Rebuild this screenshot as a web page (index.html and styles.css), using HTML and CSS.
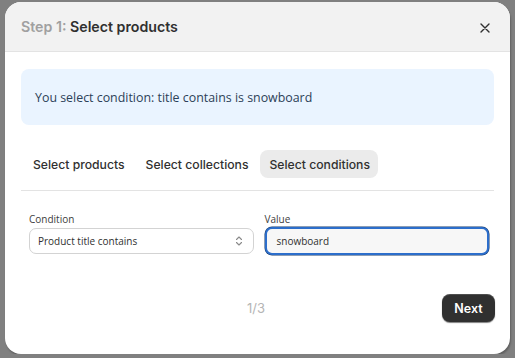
FILE: index.html
```html
<!DOCTYPE html>
<html lang="en">
<head>
    <meta charset="UTF-8">
    <title>Select products</title>
    <link rel="stylesheet" href="styles.css">
</head>
<body>
    <div class="modal">
        <header class="modal-header">
            <h2><span class="step">Step 1:</span> Select products</h2>
            <button class="closebtn" aria-label="Close">
                <svg width="10" height="10" viewBox="0 0 10 10"><path d="M1 1L9 9M9 1L1 9" stroke="#303030" stroke-width="1.4" stroke-linecap="round"/></svg>
            </button>
        </header>
        <div class="modal-body">
            <div class="banner">You select condition: title contains is snowboard</div>
            <nav class="tabs">
                <a href="#">Select products</a>
                <a href="#">Select collections</a>
                <a href="#" class="active">Select conditions</a>
            </nav>
            <div class="fields">
                <label class="field">
                    <span class="label">Condition</span>
                    <span class="select">
                        Product title contains
                        <svg width="8" height="12" viewBox="0 0 8 12"><path d="M1.5 4.5L4 2L6.5 4.5M1.5 7.5L4 10L6.5 7.5" fill="none" stroke="#8a8a8a" stroke-width="1.1" stroke-linecap="round" stroke-linejoin="round"/></svg>
                    </span>
                </label>
                <label class="field">
                    <span class="label">Value</span>
                    <span class="input">snowboard</span>
                </label>
            </div>
        </div>
        <footer class="modal-footer">
            <span class="pager">1/3</span>
            <button class="next">Next</button>
        </footer>
    </div>
</body>
</html>
```

FILE: styles.css
```css
:root {
    --backdrop: #808080;
    --header-bg: #f2f2f2;
    --border: #e3e3e3;
    --text: #303030;
    --muted: #a0a0a0;
}
body {
    margin: 0;
    padding: 2px 5px 0 5px;
    background: var(--backdrop);
    font-family: Inter, sans-serif;
    color: var(--text);
}
.modal {
    width: 505px;
    height: 352px;
    background: #fff;
    border-radius: 16px;
    overflow: hidden;
    display: flex;
    flex-direction: column;
    box-shadow: 1px 2px 2px rgba(0, 0, 0, 0.25);
}
.modal-header {
    height: 50px;
    background: var(--header-bg);
    border-bottom: 1px solid var(--border);
    display: flex;
    align-items: center;
    justify-content: space-between;
    padding: 0 16px 0 16px;
    box-sizing: border-box;
}
.modal-header h2 {
    margin: 0;
    font-size: 14.2px;
    font-weight: 600;
}
.step {
    color: var(--muted);
}
.closebtn {
    background: none;
    border: none;
    padding: 4px;
    margin-top: 2px;
    display: flex;
    cursor: pointer;
}
.modal-body {
    padding: 17px 16px 0 16px;
}
.banner {
    background: #eaf4ff;
    border-radius: 8px;
    height: 56px;
    display: flex;
    align-items: center;
    padding: 0 14px;
    font-family: "Open Sans", sans-serif;
    font-size: 12.4px;
    color: #2c4158;
}
.tabs {
    display: flex;
    gap: 3px;
    margin-top: 25px;
    padding: 0 0 12px 3px;
    border-bottom: 1px solid var(--border);
}
.tabs a {
    color: var(--text);
    text-decoration: none;
    font-size: 12.2px;
    font-weight: 500;
    padding: 7px 9px 6px 9px;
    border-radius: 8px;
    line-height: 15px;
}
.tabs a.active {
    background: #ebebeb;
    padding-right: 8px;
}
.fields {
    display: flex;
    gap: 11px;
    padding: 21px 5px 0 8px;
    font-family: "Open Sans", sans-serif;
}
.field {
    display: flex;
    flex-direction: column;
    gap: 2px;
    flex: 1;
}
.label {
    font-size: 10px;
    color: #404040;
    line-height: 14px;
}
.select, .input {
    height: 26px;
    box-sizing: border-box;
    display: flex;
    align-items: center;
    justify-content: space-between;
    border-radius: 7px;
    font-size: 10px;
    color: #303030;
}
.select {
    border: 1px solid #d3d3d3;
    padding: 0 10px 0 8px;
}
.input {
    height: 28px;
    margin-top: -1px;
    border: 2px solid #2c6ecb;
    background: #f7f7f7;
    padding: 0 10px;
    box-shadow: 0 0 0 0.5px #1b3d6b;
}
.modal-footer {
    margin-top: auto;
    height: 72px;
    display: flex;
    align-items: flex-start;
    padding: 12px 15px 0 16px;
    box-sizing: border-box;
    position: relative;
}
.pager {
    position: absolute;
    left: 242px;
    top: 18px;
    font-size: 13px;
    color: #b5b5b5;
}
.next {
    margin-left: auto;
    background: #303030;
    color: #fff;
    border: none;
    border-radius: 8px;
    font-family: Inter, sans-serif;
    font-size: 12.5px;
    font-weight: 600;
    width: 53px;
    height: 28px;
    box-shadow: 0 1px 1px rgba(0, 0, 0, 0.5), inset 0 1px 0 rgba(255, 255, 255, 0.15);
}
```
